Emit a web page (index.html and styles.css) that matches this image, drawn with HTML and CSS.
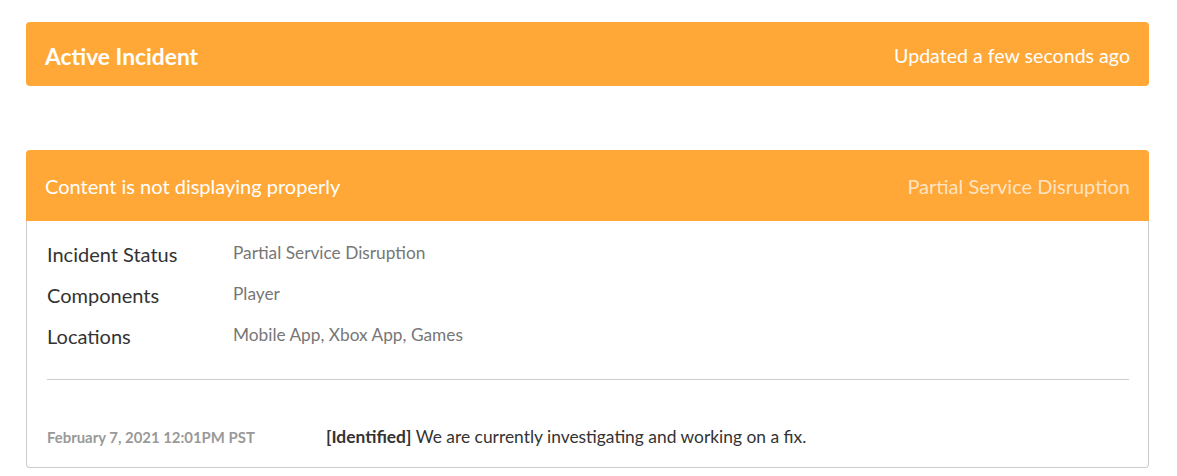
FILE: index.html
```html
<!DOCTYPE html>
<html>
<head>
<meta charset="utf-8">
<link rel="stylesheet" href="styles.css">
</head>
<body>
<div class="page">
  <div class="banner">
    <h1 class="banner-title">Active Incident</h1>
    <span class="banner-updated">Updated a few seconds ago</span>
  </div>

  <div class="incident">
    <div class="incident-head">
      <span class="incident-name">Content is not displaying properly</span>
      <span class="incident-status">Partial Service Disruption</span>
    </div>
    <div class="incident-body">
      <div class="details">
        <div class="detail-row">
          <span class="detail-label">Incident Status</span>
          <span class="detail-value">Partial Service Disruption</span>
        </div>
        <div class="detail-row">
          <span class="detail-label">Components</span>
          <span class="detail-value">Player</span>
        </div>
        <div class="detail-row">
          <span class="detail-label">Locations</span>
          <span class="detail-value">Mobile App, Xbox App, Games</span>
        </div>
      </div>
      <div class="update">
        <span class="update-time">February 7, 2021 12:01PM PST</span>
        <span class="update-text"><strong>[Identified]</strong> We are currently investigating and working on a fix.</span>
      </div>
    </div>
  </div>
</div>
</body>
</html>
```

FILE: styles.css
```css
* { box-sizing: border-box; }
html, body { margin: 0; padding: 0; background: #fff; }
body { font-family: Lato, "Noto Sans", sans-serif; color: #333; }

.page {
  padding: 22px 28px 0 26px;
}

.banner {
  height: 64px;
  background: #ffa837;
  border-radius: 4px;
  display: flex;
  align-items: center;
  justify-content: space-between;
  padding: 3px 19px 0;
  color: #fff;
}
.banner-title {
  margin: 0;
  font-size: 22.8px;
  font-weight: 700;
}
.banner-updated {
  font-size: 19.6px;
}

.incident {
  margin-top: 64px;
  border-radius: 4px;
}
.incident-head {
  height: 71px;
  background: #ffa837;
  border-radius: 4px 4px 0 0;
  display: flex;
  align-items: center;
  justify-content: space-between;
  padding: 0 19px;
  color: #fff;
  font-size: 20px;
}
.incident-status {
  color: rgba(255, 255, 255, 0.7);
}
.incident-body {
  border: 1px solid #ccc;
  border-top: none;
  border-radius: 0 0 4px 4px;
  padding: 19px 19px 18px 20px;
}
.details {
  border-bottom: 1px solid #ccc;
  padding-bottom: 28px;
}
.detail-row {
  display: flex;
  align-items: flex-start;
  margin-bottom: 12px;
}
.detail-row:last-child { margin-bottom: 0; }
.detail-label {
  width: 186px;
  flex: none;
  font-size: 20px;
  line-height: 29px;
  color: #333;
}
.detail-value {
  font-size: 17.3px;
  line-height: 25px;
  color: #777;
}

.update {
  display: flex;
  align-items: center;
  padding-top: 45px;
  line-height: 24px;
}
.update-time {
  width: 279px;
  flex: none;
  font-size: 14.9px;
  font-weight: 700;
  color: #999;
}
.update-text {
  font-size: 17.4px;
  color: #333;
}
.update-text strong { font-weight: 700; }
```
